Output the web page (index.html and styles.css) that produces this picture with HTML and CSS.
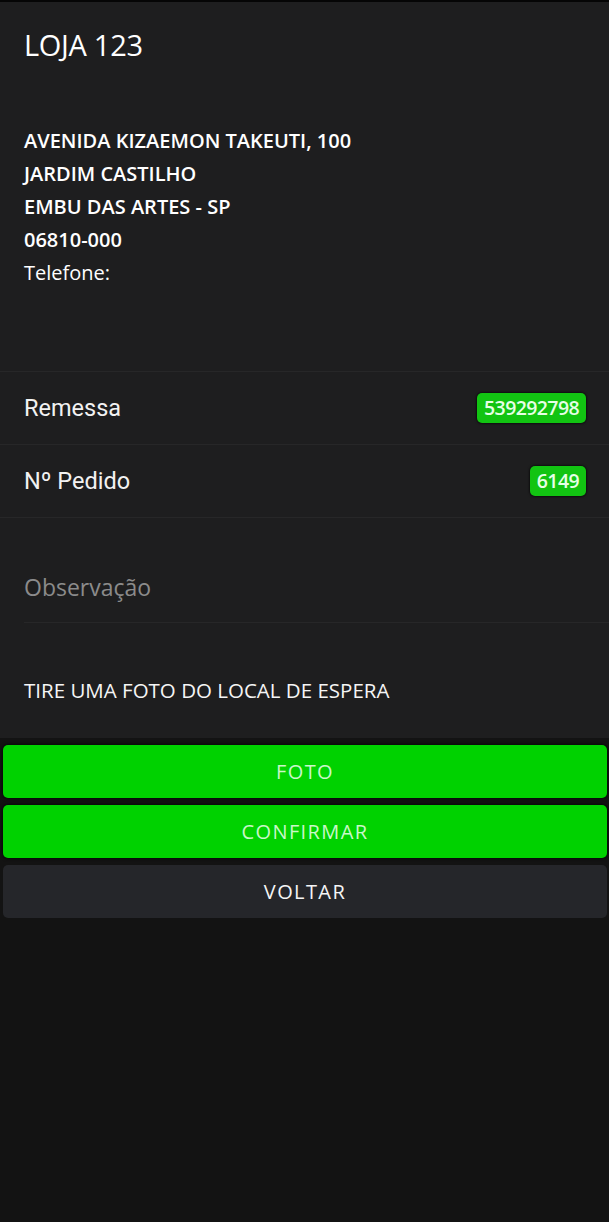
FILE: index.html
```html
<!DOCTYPE html>
<html lang="pt-BR">
<head>
<meta charset="utf-8">
<title>LOJA 123</title>
<link rel="stylesheet" href="styles.css">
</head>
<body>
<div class="screen">
  <main class="content">
    <h1 class="title">LOJA 123</h1>
    <div class="address">
      <div class="addr-line strong">AVENIDA KIZAEMON TAKEUTI, 100</div>
      <div class="addr-line strong">JARDIM CASTILHO</div>
      <div class="addr-line strong">EMBU DAS ARTES - SP</div>
      <div class="addr-line strong">06810-000</div>
      <div class="addr-line">Telefone:</div>
    </div>
    <div class="list">
      <div class="row">
        <span class="row-label">Remessa</span>
        <span class="badge">539292798</span>
      </div>
      <div class="row inset">
        <span class="row-label">Nº Pedido</span>
        <span class="badge">6149</span>
      </div>
    </div>
    <div class="obs">
      <span class="obs-placeholder">Observação</span>
    </div>
    <p class="hint">TIRE UMA FOTO DO LOCAL DE ESPERA</p>
  </main>
  <footer class="actions">
    <button class="btn btn-green">FOTO</button>
    <button class="btn btn-green">CONFIRMAR</button>
    <button class="btn btn-dark">VOLTAR</button>
  </footer>
</div>
</body>
</html>
```

FILE: styles.css
```css
html, body {
  margin: 0;
  padding: 0;
  background: #131313;
}
body {
  font-family: "Open Sans", "Noto Sans", sans-serif;
  color: #ffffff;
  width: 609px;
  min-height: 1222px;
}
.screen {
  border-top: 2px solid #050505;
  display: flex;
  flex-direction: column;
}
.content {
  background: #1e1e1f;
  display: flex;
  flex-direction: column;
}
.title {
  margin: 0;
  padding: 24px 24px 0;
  font-size: 29px;
  font-weight: 400;
  line-height: 38px;
  letter-spacing: -0.3px;
}
.address {
  padding: 60px 24px 0;
  display: flex;
  flex-direction: column;
  height: 307px;
  box-sizing: border-box;
}
.addr-line {
  font-size: 20px;
  line-height: 33px;
}
.addr-line.strong {
  font-weight: 600;
}
.list {
  display: flex;
  flex-direction: column;
  border-top: 1px solid #272728;
}
.row {
  height: 73px;
  box-sizing: border-box;
  padding: 0 23px 0 24px;
  display: flex;
  align-items: center;
  justify-content: space-between;
  border-bottom: 1px solid #272728;
}
.row-label {
  font-family: Roboto, "Noto Sans", sans-serif;
  font-size: 23.5px;
  color: #f2f2f2;
}
.badge {
  background: #12c412;
  color: #e6ffe6;
  font-family: "Open Sans", sans-serif;
  font-weight: 600;
  font-size: 19.5px;
  letter-spacing: -0.6px;
  line-height: 30px;
  height: 30px;
  padding: 0 7px;
  border-radius: 5px;
  box-shadow: 0 0 2px 1px rgba(0, 0, 0, 0.55);
}
.obs {
  height: 105px;
  box-sizing: border-box;
  margin-left: 24px;
  padding-bottom: 20px;
  display: flex;
  align-items: flex-end;
  border-bottom: 1px solid #272728;
}
.obs-placeholder {
  font-size: 23px;
  color: #8b8b8b;
  line-height: 30px;
}
.hint {
  margin: 0;
  padding: 52px 24px 33px;
  font-size: 20.5px;
  line-height: 30px;
  color: #f5f5f5;
}
.actions {
  display: flex;
  flex-direction: column;
  gap: 7px;
  padding: 7px 2px 0 3px;
}
.btn {
  height: 53px;
  border: none;
  border-radius: 5px;
  font-family: "Open Sans", sans-serif;
  font-size: 20px;
  letter-spacing: 1.4px;
  cursor: pointer;
}
.btn-green {
  background: #00d200;
  color: #c9f7c9;
  box-shadow: 0 0 3px 1px rgba(0, 0, 0, 0.6);
}
.btn-dark {
  background: #25262a;
  color: #f5f5f5;
}
```
